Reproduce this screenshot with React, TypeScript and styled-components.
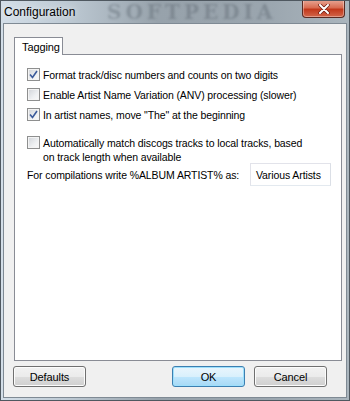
import { FC } from "react";
import styled, { createGlobalStyle } from "styled-components";

const GlobalStyle = createGlobalStyle`
	html, body {
		margin: 0;
		padding: 0;
		background: #ffffff;
	}
	#root {
		width: 350px;
		height: 401px;
	}
`;

interface IOption {
	label: string;
	checked: boolean;
}

const options: IOption[] = [
	{ label: "Format track/disc numbers and counts on two digits", checked: true },
	{ label: "Enable Artist Name Variation (ANV) processing (slower)", checked: false },
	{ label: 'In artist names, move "The" at the beginning', checked: true },
	{
		label: "Automatically match discogs tracks to local tracks, based on track length when available",
		checked: false,
	},
];

const CheckMark: FC = () => (
	<svg width="9" height="9" viewBox="0 0 9 9">
		<path d="M1 4.5 L3.5 7.5 L8 1" fill="none" stroke="#3a5a9a" strokeWidth="1.6" />
	</svg>
);

const CloseGlyph: FC = () => (
	<svg width="12" height="10" viewBox="0 0 12 10">
		<path d="M2 1 L10 9 M10 1 L2 9" stroke="#6a1a10" strokeWidth="3.4" strokeLinecap="round" />
		<path d="M2 1 L10 9 M10 1 L2 9" stroke="#ffffff" strokeWidth="2" strokeLinecap="round" />
	</svg>
);

const App: FC = () => {
	return (
		<>
			<GlobalStyle />
			<Window>
				<TitleBar>
					<Title>Configuration</Title>
					<Watermark>SOFTPEDIA</Watermark>
					<CloseButton>
						<CloseGlyph />
					</CloseButton>
				</TitleBar>
				<Client>
					<Tabs>
						<TabStrip>
							<Tab>Tagging</Tab>
						</TabStrip>
						<Panel>
							{options.map((opt, idx) => (
								<CheckRow key={idx} $gapBefore={idx === 3 ? 8 : 0}>
									<CheckBox>{opt.checked && <CheckMark />}</CheckBox>
									<CheckLabel>{opt.label}</CheckLabel>
								</CheckRow>
							))}
							<FieldRow>
								<span>For compilations write %ALBUM ARTIST% as:</span>
								<TextBox>Various Artists</TextBox>
							</FieldRow>
						</Panel>
					</Tabs>
					<ButtonBar>
						<Button>Defaults</Button>
						<Spacer />
						<Button $default>OK</Button>
						<Button>Cancel</Button>
					</ButtonBar>
				</Client>
			</Window>
		</>
	);
};

export default App;

const Window = styled.div`
	width: 350px;
	height: 401px;
	box-sizing: border-box;
	display: flex;
	flex-direction: column;
	border: 1px solid #4f5860;
	background: linear-gradient(90deg, #d3dee8 0%, #bcc8d2 20%, #97a2ab 45%, #9aa5ae 75%, #aab5bd 100%);
	font-family: "Liberation Sans", Arial, sans-serif;
	font-size: 10.5px;
	letter-spacing: -0.1px;
	color: #000000;
	overflow: hidden;
`;

const TitleBar = styled.div`
	position: relative;
	height: 22px;
	flex-shrink: 0;
	display: flex;
	align-items: center;
	padding-left: 3px;
`;

const Title = styled.span`
	font-size: 12px;
	letter-spacing: 0;
	color: #000000;
	text-shadow: 0 0 6px rgba(255, 255, 255, 0.9);
	position: relative;
	z-index: 1;
`;

const Watermark = styled.span`
	position: absolute;
	left: 106px;
	top: 1px;
	line-height: 20px;
	font-family: "DejaVu Serif", serif;
	font-weight: bold;
	font-size: 20px;
	letter-spacing: 4px;
	color: rgba(70, 80, 90, 0.3);
	filter: blur(1.2px);
`;

const CloseButton = styled.div`
	position: absolute;
	top: -1px;
	right: 4px;
	width: 43px;
	height: 18px;
	box-sizing: border-box;
	border: 1px solid #5a2a22;
	border-top: none;
	border-radius: 0 0 4px 4px;
	background: linear-gradient(180deg, #e8a796 0%, #d86c52 45%, #c2381b 55%, #d2664a 100%);
	box-shadow: inset 0 0 0 1px rgba(255, 255, 255, 0.35);
	display: flex;
	align-items: center;
	justify-content: center;
	z-index: 1;
`;

const Client = styled.div`
	flex: 1;
	margin: 0 2px 2px 2px;
	box-sizing: border-box;
	border: 1px solid #7f8a94;
	background: #f0f0f0;
	padding: 13px 4px 10px 10px;
	display: flex;
	flex-direction: column;
`;

const Tabs = styled.div`
	flex: 1;
	display: flex;
	flex-direction: column;
`;

const TabStrip = styled.div`
	display: flex;
	height: 18px;
	margin-bottom: -1px;
	position: relative;
	z-index: 1;
`;

const Tab = styled.div`
	width: 49px;
	box-sizing: border-box;
	border: 1px solid #898c95;
	border-bottom: none;
	background: #ffffff;
	padding: 3px 0 0 7px;
	font-size: 11px;
`;

const Panel = styled.div`
	flex: 1;
	border: 1px solid #898c95;
	background: #ffffff;
	padding: 13px 10px 0 12px;
	display: flex;
	flex-direction: column;
	gap: 6px;
`;

const CheckRow = styled.label<{ $gapBefore: number }>`
	display: flex;
	align-items: flex-start;
	gap: 3px;
	line-height: 14px;
	margin-top: ${({ $gapBefore }) => $gapBefore}px;
`;

const CheckBox = styled.span`
	width: 13px;
	height: 13px;
	flex-shrink: 0;
	box-sizing: border-box;
	border: 1px solid #8e8f8f;
	background: linear-gradient(135deg, #d0d3d8 0%, #eef0f2 60%, #fafafa 100%);
	box-shadow: inset 0 0 0 1px #f4f4f4;
	display: flex;
	align-items: center;
	justify-content: center;
`;

const CheckLabel = styled.span`
	max-width: 264px;
`;

const FieldRow = styled.div`
	display: flex;
	align-items: center;
	justify-content: space-between;
	margin-top: -7px;
`;

const TextBox = styled.div`
	width: 81px;
	height: 23px;
	box-sizing: border-box;
	border: 1px solid;
	border-color: #e2e3ea #dbdfe6 #e3e9ef #e2e3ea;
	background: #ffffff;
	display: flex;
	align-items: center;
	padding-left: 5px;
`;

const ButtonBar = styled.div`
	display: flex;
	align-items: center;
	gap: 9px;
	padding: 5px 15px 0 0;
	margin-left: -1px;
`;

const Spacer = styled.div`
	flex: 1;
`;

const Button = styled.div<{ $default?: boolean }>`
	width: 73px;
	height: 21px;
	box-sizing: border-box;
	border: 1px solid ${({ $default }) => ($default ? "#3c7fb1" : "#707070")};
	border-radius: 3px;
	background: ${({ $default }) =>
		$default
			? "linear-gradient(180deg, #eaf6fd 0%, #d9f0fc 50%, #bee6fd 51%, #a7d9f5 100%)"
			: "linear-gradient(180deg, #f2f2f2 0%, #ebebeb 50%, #dddddd 51%, #cfcfcf 100%)"};
	box-shadow: inset 0 0 0 1px ${({ $default }) => ($default ? "#9ee0fc" : "#fcfcfc")};
	display: flex;
	align-items: center;
	justify-content: center;
	font-size: 11px;
`;
